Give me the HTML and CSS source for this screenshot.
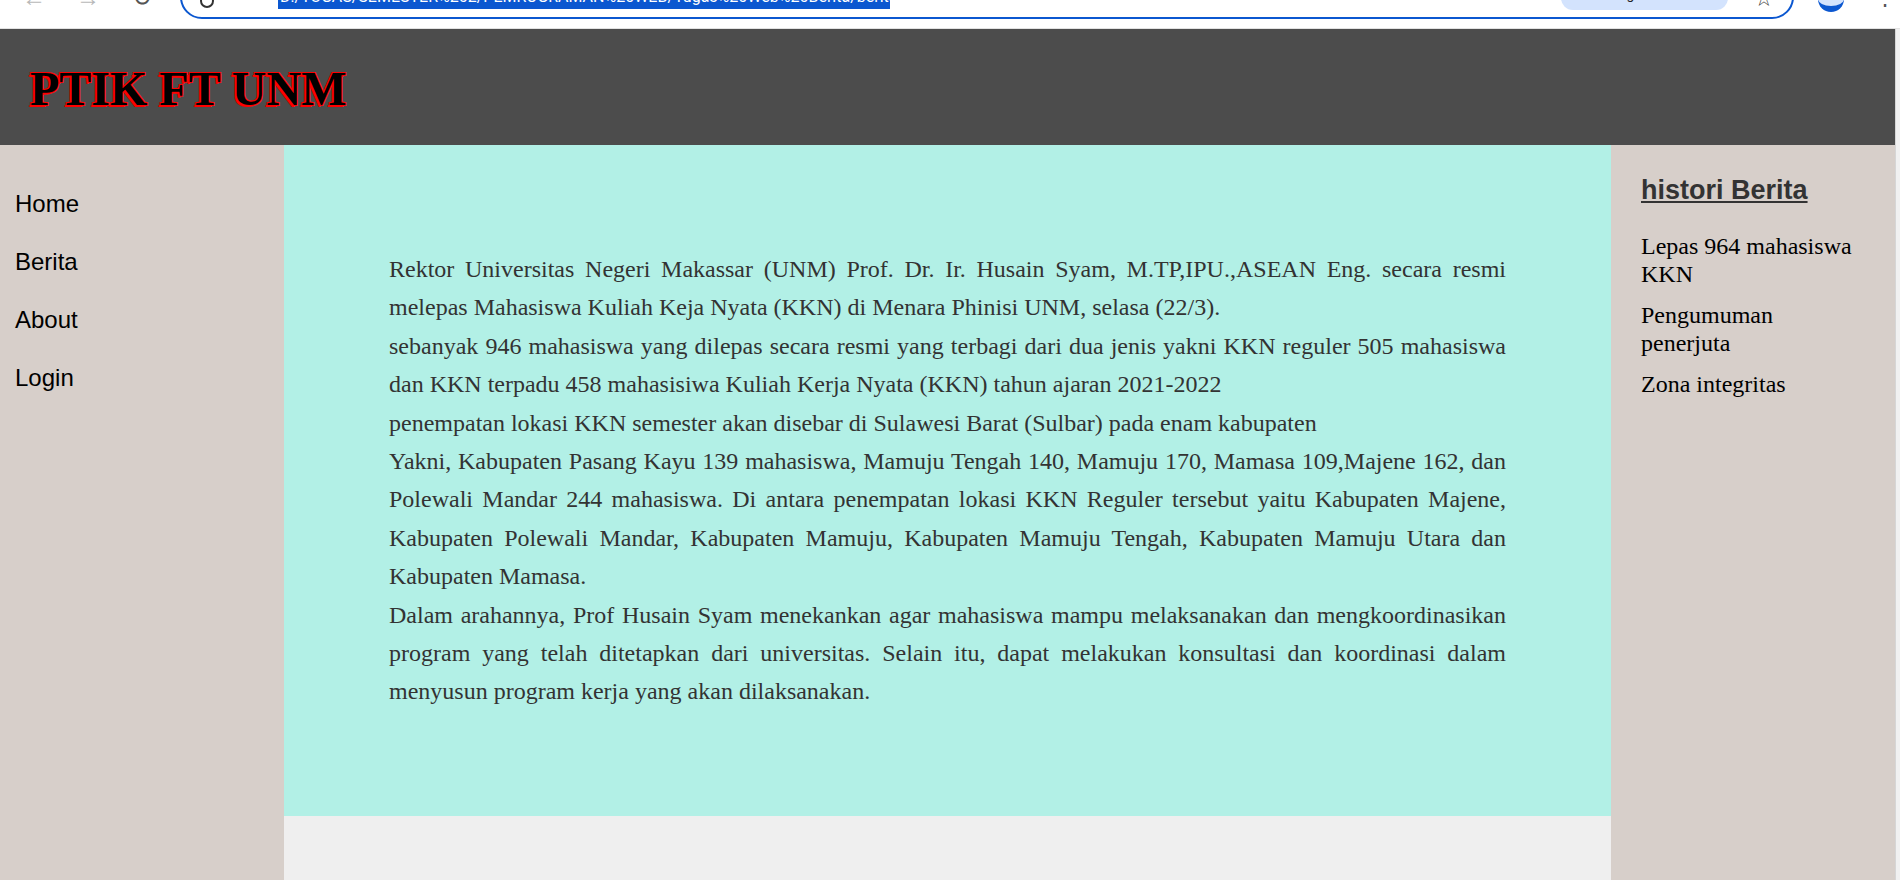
FILE: index.html
```html
<!DOCTYPE html>
<html lang="id">
<head>
<meta charset="utf-8">
<title>PTIK FT UNM</title>
<link rel="stylesheet" href="styles.css">
</head>
<body>
<div class="chrome">
  <div class="chrome-nav">
    <span class="cn-btn">&#8592;</span>
    <span class="cn-btn">&#8594;</span>
    <span class="cn-btn cn-dark">&#8635;</span>
  </div>
  <div class="omnibox">
    <span class="site-icon"></span>
    <span class="url-sel">D:/TUGAS/SEMESTER%202/PEMROGRAMAN%20WEB/Tugas%20Web%20Berita/berita%20(2).html</span>
    <span class="ob-spacer"></span>
    <span class="lens">Google Lens</span>
    <span class="star">&#9734;</span>
  </div>
  <span class="profile"></span>
  <span class="dots">&#8942;</span>
</div>
<div class="viewport">
  <div class="page">
    <header class="site-header">
      <h1 class="site-title">PTIK FT UNM</h1>
    </header>
    <div class="layout">
      <nav class="sidenav">
        <a class="nav-item" href="#">Home</a>
        <a class="nav-item" href="#">Berita</a>
        <a class="nav-item" href="#">About</a>
        <a class="nav-item" href="#">Login</a>
      </nav>
      <main class="main-col">
        <article class="news">
          <p class="news-text">Rektor Universitas Negeri Makassar (UNM) Prof. Dr. Ir. Husain Syam, M.TP,IPU.,ASEAN Eng. secara resmi melepas Mahasiswa Kuliah Keja Nyata (KKN) di Menara Phinisi UNM, selasa (22/3).<br>sebanyak 946 mahasiswa yang dilepas secara resmi yang terbagi dari dua jenis yakni KKN reguler 505 mahasiswa dan KKN terpadu 458 mahasisiwa Kuliah Kerja Nyata (KKN) tahun ajaran 2021-2022<br>penempatan lokasi KKN semester akan disebar di Sulawesi Barat (Sulbar) pada enam kabupaten<br>Yakni, Kabupaten Pasang Kayu 139 mahasiswa, Mamuju Tengah 140, Mamuju 170, Mamasa 109,Majene 162, dan Polewali Mandar 244 mahasiswa. Di antara penempatan lokasi KKN Reguler tersebut yaitu Kabupaten Majene, Kabupaten Polewali Mandar, Kabupaten Mamuju, Kabupaten Mamuju Tengah, Kabupaten Mamuju Utara dan Kabupaten Mamasa.<br>Dalam arahannya, Prof Husain Syam menekankan agar mahasiswa mampu melaksanakan dan mengkoordinasikan program yang telah ditetapkan dari universitas. Selain itu, dapat melakukan konsultasi dan koordinasi dalam menyusun program kerja yang akan dilaksanakan.</p>
        </article>
      </main>
      <aside class="history">
        <h2 class="history-title">histori Berita</h2>
        <ul class="history-list">
          <li>Lepas 964 mahasiswa KKN</li>
          <li>Pengumuman penerjuta</li>
          <li>Zona integritas</li>
        </ul>
      </aside>
    </div>
  </div>
  <div class="scrollbar"></div>
</div>
</body>
</html>
```
FILE: styles.css
```css
* { box-sizing: border-box; }
html, body { margin: 0; padding: 0; }
body {
  width: 1900px;
  height: 880px;
  overflow: hidden;
  background: #efefef;
  font-family: "Liberation Serif", "Times New Roman", serif;
}

/* browser chrome strip */
.chrome {
  height: 29px;
  background: #ffffff;
  border-bottom: 1px solid #e2e2e2;
  display: flex;
  align-items: flex-start;
  overflow: hidden;
  font-family: Roboto, "Liberation Sans", sans-serif;
}
.chrome-nav {
  width: 180px;
  flex: none;
  display: flex;
  gap: 30px;
  padding-left: 22px;
  margin-top: -14px;
}
.cn-btn { font-size: 24px; color: #b8b8b8; line-height: 24px; width: 24px; text-align: center; }
.cn-dark { color: #555; }
.omnibox {
  width: 1614px;
  flex: none;
  height: 44px;
  margin-top: -25px;
  border: 2px solid #0b57d0;
  border-radius: 24px;
  display: flex;
  align-items: flex-end;
  padding: 0 18px 8px 18px;
}
.site-icon {
  width: 14px;
  height: 14px;
  border: 2px solid #333;
  border-radius: 50%;
  margin-bottom: 1px;
}
.url-sel {
  margin-left: 64px;
  width: 612px;
  height: 22px;
  background: #0b57d0;
  color: #fff;
  font-size: 16px;
  line-height: 20px;
  white-space: nowrap;
  overflow: hidden;
  padding-left: 2px;
}
.ob-spacer { flex: 1; }
.lens {
  width: 167px;
  height: 24px;
  border-radius: 12px;
  background: #d3e3fd;
  color: #1f1f1f;
  font-size: 14px;
  line-height: 16px;
  padding-left: 40px;
  margin-bottom: -1px;
}
.star { margin-left: 26px; font-size: 22px; line-height: 20px; color: #444; }
.profile {
  width: 26px;
  height: 26px;
  flex: none;
  margin: -14px 0 0 24px;
  border-radius: 50%;
  background: #d3e3fd;
  border-bottom: 6px solid #0b57d0;
}
.dots { flex: none; margin: -12px 0 0 30px; font-size: 22px; line-height: 20px; color: #555; }

/* page */
.viewport {
  display: flex;
  height: 851px;
}
.page {
  flex: 1;
  display: flex;
  flex-direction: column;
}
.scrollbar {
  width: 5px;
  background: #f1f1f1;
  border-left: 1px solid #d6d6d6;
}

.site-header {
  height: 116px;
  background: #4c4c4c;
  padding: 32px 30px 0;
}
.site-title {
  margin: 0;
  font-family: "Liberation Serif", "Times New Roman", serif;
  font-weight: bold;
  font-size: 48px;
  line-height: 55px;
  color: #000;
  text-shadow: -1px -1px 0 #ff0000, 1px -1px 0 #ff0000, -1px 1px 0 #ff0000, 1px 1px 0 #ff0000, -2px 2px 0 #ff0000;
}

.layout {
  flex: 1;
  display: grid;
  grid-template-columns: 284px 1fr 284px;
}

.sidenav {
  background: #d7cfca;
  padding-top: 30px;
  display: flex;
  flex-direction: column;
}
.nav-item {
  display: block;
  padding: 15px 15px;
  font-family: "Liberation Sans", Arial, sans-serif;
  font-size: 24px;
  line-height: 28px;
  color: #000;
  text-decoration: none;
}

.main-col {
  background: #efefef;
}
.news {
  background: #b2f0e6;
  padding: 105px 105px;
}
.news-text {
  margin: 0;
  font-size: 24px;
  line-height: 38.4px;
  text-align: justify;
  color: #333;
}

.history {
  background: #d7cfca;
  padding: 30px 30px 0;
}
.history-title {
  margin: 0 0 27px;
  font-family: "Liberation Sans", Arial, sans-serif;
  font-weight: bold;
  font-size: 27px;
  line-height: 31px;
  color: #333;
  text-decoration: underline;
}
.history-list {
  list-style: none;
  margin: 0;
  padding: 0;
  font-size: 24px;
  line-height: 27.6px;
  color: #000;
}
.history-list li { margin-bottom: 14px; }
```
